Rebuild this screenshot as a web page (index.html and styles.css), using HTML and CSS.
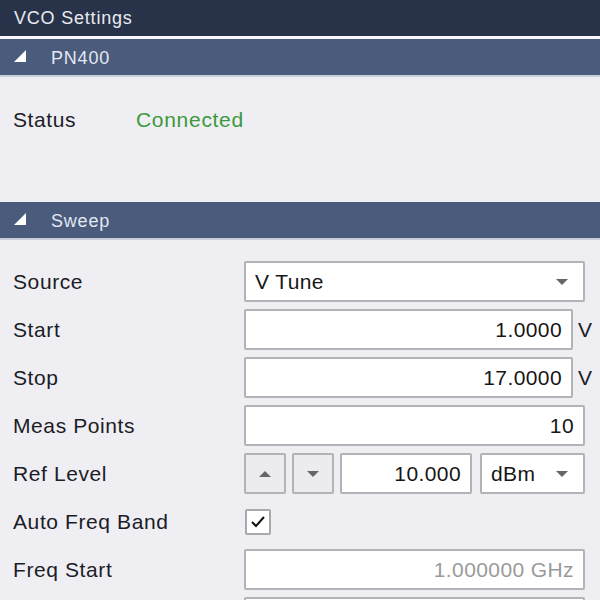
FILE: index.html
```html
<!DOCTYPE html>
<html>
<head>
<meta charset="utf-8">
<link rel="stylesheet" href="styles.css">
</head>
<body>
<div class="panel">
  <div class="titlebar">VCO Settings</div>
  <div class="section-header">
    <svg class="tri" width="12" height="12" viewBox="0 0 12 12"><polygon points="0,12 12,12 12,0" fill="#ffffff"/></svg>
    <span>PN400</span>
  </div>
  <div class="status-area">
    <div class="status-row">
      <span class="label">Status</span>
      <span class="connected">Connected</span>
    </div>
  </div>
  <div class="section-header">
    <svg class="tri" width="12" height="12" viewBox="0 0 12 12"><polygon points="0,12 12,12 12,0" fill="#ffffff"/></svg>
    <span>Sweep</span>
  </div>
  <div class="form">
    <div class="label">Source</div>
    <div class="ctrl">
      <div class="select full"><span>V Tune</span><span class="arrow-down"></span></div>
    </div>

    <div class="label">Start</div>
    <div class="ctrl">
      <div class="input unit-input">1.0000</div><span class="unit">V</span>
    </div>

    <div class="label">Stop</div>
    <div class="ctrl">
      <div class="input unit-input">17.0000</div><span class="unit">V</span>
    </div>

    <div class="label">Meas Points</div>
    <div class="ctrl">
      <div class="input full">10</div>
    </div>

    <div class="label">Ref Level</div>
    <div class="ctrl">
      <div class="btn"><span class="arrow-up"></span></div>
      <div class="btn"><span class="arrow-down"></span></div>
      <div class="input ref-input">10.000</div>
      <div class="select unit-select"><span>dBm</span><span class="arrow-down"></span></div>
    </div>

    <div class="label">Auto Freq Band</div>
    <div class="ctrl">
      <div class="checkbox">
        <svg width="16" height="14" viewBox="0 0 16 14"><polyline points="2,7 6,11 14,2" fill="none" stroke="#111" stroke-width="2"/></svg>
      </div>
    </div>

    <div class="label">Freq Start</div>
    <div class="ctrl">
      <div class="input full disabled">1.000000 GHz</div>
    </div>

    <div class="label"></div>
    <div class="ctrl">
      <div class="input full disabled"></div>
    </div>
  </div>
</div>
</body>
</html>
```

FILE: styles.css
```css
html, body {
  margin: 0;
  padding: 0;
  background: #eeeef3;
  overflow: hidden;
}
.panel {
  width: 600px;
  height: 600px;
  overflow: hidden;
  font-family: "Liberation Sans", Arial, sans-serif;
  background: #eeeef3;
}
.titlebar {
  height: 36px;
  line-height: 36px;
  background: #28334a;
  color: #e8ebf0;
  font-size: 18px;
  letter-spacing: 0.8px;
  padding-left: 14px;
  border-bottom: 3px solid #f7f8fb;
}
.section-header {
  height: 36px;
  background: #4b5b7c;
  color: #e2e8f2;
  font-size: 18px;
  letter-spacing: 0.8px;
  display: flex;
  align-items: center;
  border-bottom: 2px solid #c9cedb;
}
.section-header .tri {
  margin-left: 14px;
  margin-right: 25px;
  margin-top: -3px;
}
.section-header span {
  padding-top: 3px;
}
.status-area {
  height: 125px;
  padding-top: 19px;
  box-sizing: border-box;
}
.status-row {
  display: flex;
  align-items: center;
  height: 48px;
  padding-left: 13px;
}
.status-row .label {
  width: 123px;
}
.label {
  font-size: 21px;
  color: #1c1c26;
  letter-spacing: 0.6px;
}
.connected {
  font-size: 21px;
  color: #3b9a3a;
  letter-spacing: 0.7px;
}
.form {
  display: grid;
  grid-template-columns: 231px 341px;
  grid-auto-rows: 41px;
  row-gap: 7px;
  padding: 21px 0 0 13px;
  align-items: center;
}
.ctrl {
  display: flex;
  align-items: center;
  height: 41px;
}
.input, .select, .btn {
  box-sizing: border-box;
  flex-shrink: 0;
  height: 41px;
  border: 2px solid #b3b3b6;
  border-radius: 2px;
  background: #ffffff;
  font-size: 21px;
  color: #161616;
  letter-spacing: 0.4px;
  display: flex;
  align-items: center;
}
.input {
  justify-content: flex-end;
  padding-right: 9px;
}
.full {
  width: 341px;
}
.unit-input {
  width: 329px;
}
.unit {
  font-size: 21px;
  color: #1c1c26;
  margin-left: 5px;
  flex-shrink: 0;
}
.select {
  justify-content: space-between;
  padding: 0 15px 0 9px;
}
.btn {
  width: 42px;
  background: #ececef;
  justify-content: center;
  margin-right: 6px;
}
.ref-input {
  width: 132px;
  margin-right: 8px;
}
.unit-select {
  width: 105px;
}
.arrow-down {
  width: 0;
  height: 0;
  border-left: 6px solid transparent;
  border-right: 6px solid transparent;
  border-top: 6px solid #666;
}
.arrow-up {
  width: 0;
  height: 0;
  border-left: 6px solid transparent;
  border-right: 6px solid transparent;
  border-bottom: 6px solid #666;
}
.checkbox {
  box-sizing: border-box;
  flex-shrink: 0;
  width: 26px;
  height: 26px;
  margin-left: 1px;
  border: 2px solid #a9a9ad;
  border-radius: 2px;
  background: #fff;
  display: flex;
  align-items: center;
  justify-content: center;
}
.disabled {
  color: #9a9a9a;
}
```
